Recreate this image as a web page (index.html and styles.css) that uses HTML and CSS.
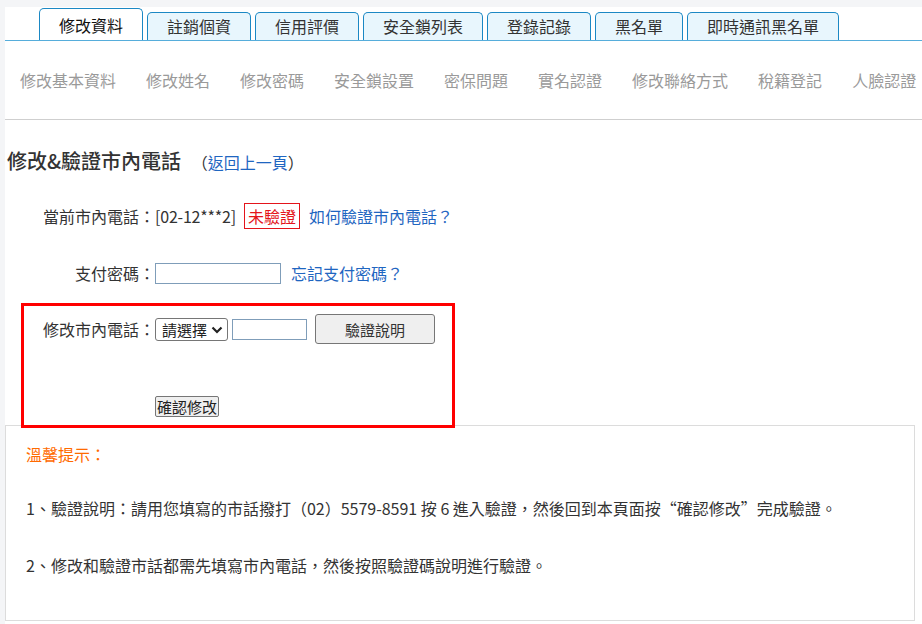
FILE: index.html
```html
<!DOCTYPE html>
<html lang="zh-Hant">
<head>
    <meta charset="UTF-8">
    <meta name="viewport" content="width=device-width, initial-scale=1.0">
    <title>修改&amp;驗證市內電話</title>
    <link rel="stylesheet" href="styles.css">
</head>
<body>
    <div class="page">
        <!-- 上方分頁 -->
        <ul class="tabs">
            <li class="tab active">修改資料</li>
            <li class="tab">註銷個資</li>
            <li class="tab">信用評價</li>
            <li class="tab">安全鎖列表</li>
            <li class="tab">登錄記錄</li>
            <li class="tab">黑名單</li>
            <li class="tab">即時通訊黑名單</li>
        </ul>

        <!-- 子選單 -->
        <div class="subnav">
            <a href="#">修改基本資料</a>
            <a href="#">修改姓名</a>
            <a href="#">修改密碼</a>
            <a href="#">安全鎖設置</a>
            <a href="#">密保問題</a>
            <a href="#">實名認證</a>
            <a href="#">修改聯絡方式</a>
            <a href="#">稅籍登記</a>
            <a href="#">人臉認證</a>
        </div>

        <div class="content">
            <h2 class="title">修改&amp;驗證市內電話 <span class="back">（<a href="#">返回上一頁</a>）</span></h2>

            <div class="row">
                <span class="label">當前市內電話：</span>
                <span class="phone-now">[02-12***2]</span>
                <span class="badge">未驗證</span>
                <a href="#" class="link">如何驗證市內電話？</a>
            </div>

            <div class="row">
                <span class="label">支付密碼：</span>
                <input type="password" class="pwd">
                <a href="#" class="link">忘記支付密碼？</a>
            </div>

            <div class="edit-box">
                <div class="row">
                    <span class="label">修改市內電話：</span>
                    <span class="select-wrap">
                        <select class="area">
                            <option>請選擇</option>
                            <option>02</option>
                            <option>03</option>
                            <option>04</option>
                        </select>
                        <svg class="chevron" width="12" height="8" viewBox="0 0 12 8"><path d="M1.5 1.5 L6 6 L10.5 1.5" fill="none" stroke="#222" stroke-width="2.2"/></svg>
                    </span>
                    <input type="text" class="phone">
                    <button class="btn-help">驗證說明</button>
                </div>
                <div class="submit-row">
                    <button class="btn-submit">確認修改</button>
                </div>
            </div>

            <div class="tips">
                <p class="tips-title">溫馨提示：</p>
                <p>1、驗證說明：請用您填寫的市話撥打（02）5579-8591 按 6 進入驗證，然後回到本頁面按“確認修改”完成驗證。</p>
                <p>2、修改和驗證市話都需先填寫市內電話，然後按照驗證碼說明進行驗證。</p>
            </div>
        </div>
    </div>
</body>
</html>
```

FILE: styles.css
```css
body, html {
    margin: 0;
    padding: 0;
    background-color: #f4f5f7;
    font-family: "Noto Sans CJK TC", "Noto Sans", sans-serif;
    font-size: 16px;
    color: #333;
}
a {
    text-decoration: none;
}
.page {
    margin: 7px 0 0 5px;
    background-color: white;
    min-height: 617px;
}

/* 分頁 */
.tabs {
    display: flex;
    align-items: flex-end;
    gap: 4px;
    list-style: none;
    margin: 0;
    padding: 0 0 0 34px;
    height: 33px;
    border-bottom: 1px solid #56addb;
}
.tab {
    height: 28px;
    line-height: 27px;
    padding: 0 19px;
    border: 1px solid #1b88c4;
    border-bottom: none;
    border-radius: 5px 5px 0 0;
    background-color: #e8f6fd;
    color: #333;
    box-sizing: border-box;
}
.tab.active {
    height: 32px;
    line-height: 32px;
    background-color: white;
    color: #111;
}

/* 子選單 */
.subnav {
    display: flex;
    align-items: center;
    height: 78px;
    border-bottom: 1px solid #cfcfcf;
    white-space: nowrap;
    overflow: hidden;
}
.subnav a {
    padding: 0 15px;
    color: #9a9a9a;
}

.content {
    padding-top: 26px;
}
.title {
    margin: 0 0 0 2px;
    height: 30px;
    line-height: 30px;
    font-size: 20px;
    font-weight: 500;
    color: #333;
}
.back {
    font-size: 16px;
    font-weight: normal;
    margin-left: 6px;
}
.back a {
    color: #1f66c1;
}

.row {
    display: flex;
    align-items: center;
    height: 30px;
    margin-top: 25px;
}
.row + .row {
    margin-top: 27px;
}
.label {
    width: 150px;
    text-align: right;
    flex-shrink: 0;
}
.phone-now {
    letter-spacing: -0.2px;
}
.badge {
    margin-left: 8px;
    padding: 0 3px;
    height: 24px;
    line-height: 24px;
    border: 1px solid #e4141b;
    color: #e4141b;
}
.link {
    margin-left: 9px;
    color: #1f66c1;
}
.pwd {
    width: 126px;
    height: 21px;
    margin: 0;
    padding: 0 2px;
    border: 1px solid #7f9db9;
    box-sizing: border-box;
}
.pwd + .link {
    margin-left: 10px;
}

/* 紅框 */
.edit-box {
    position: relative;
    width: 434px;
    margin: 15px 0 0 16px;
    padding: 8px 0 9px 0;
    border: 3px solid #ff0000;
    box-sizing: border-box;
    background-color: white;
}
.edit-box .row {
    margin-top: 0;
}
.edit-box .label {
    width: 131px;
}
.select-wrap {
    position: relative;
    display: inline-flex;
}
.area {
    appearance: none;
    width: 73px;
    height: 23px;
    margin: 0;
    padding: 0 0 0 6px;
    font-family: inherit;
    font-size: 15px;
    color: #222;
    border: 1px solid #767676;
    border-radius: 3px;
    background-color: white;
}
.chevron {
    position: absolute;
    right: 5px;
    top: 8px;
    pointer-events: none;
}
.phone {
    width: 75px;
    height: 21px;
    margin: 0 0 0 4px;
    padding: 0 2px;
    border: 1px solid #7f9db9;
    box-sizing: border-box;
}
.btn-help {
    width: 120px;
    height: 30px;
    margin-left: 8px;
    font-family: inherit;
    font-size: 15px;
    color: #333;
    background-color: #efefef;
    border: 1px solid #767676;
    border-radius: 3px;
}
.submit-row {
    margin-top: 50px;
    padding-left: 131px;
    height: 22px;
}
.btn-submit {
    height: 21px;
    margin: 0;
    padding: 0 1px;
    font-family: inherit;
    font-size: 15px;
    line-height: 19px;
    color: #222;
    background-color: #efefef;
    border: 1px solid #767676;
    border-radius: 2px;
}

/* 溫馨提示 */
.tips {
    width: 910px;
    margin-top: -3px;
    padding: 16px 0 26px 20px;
    border: 1px solid #dcdcdc;
    box-sizing: border-box;
}
.tips p {
    margin: 0;
    line-height: 57px;
}
.tips .tips-title {
    line-height: 24px;
    margin-bottom: 14px;
    color: #ff6a00;
}
```
